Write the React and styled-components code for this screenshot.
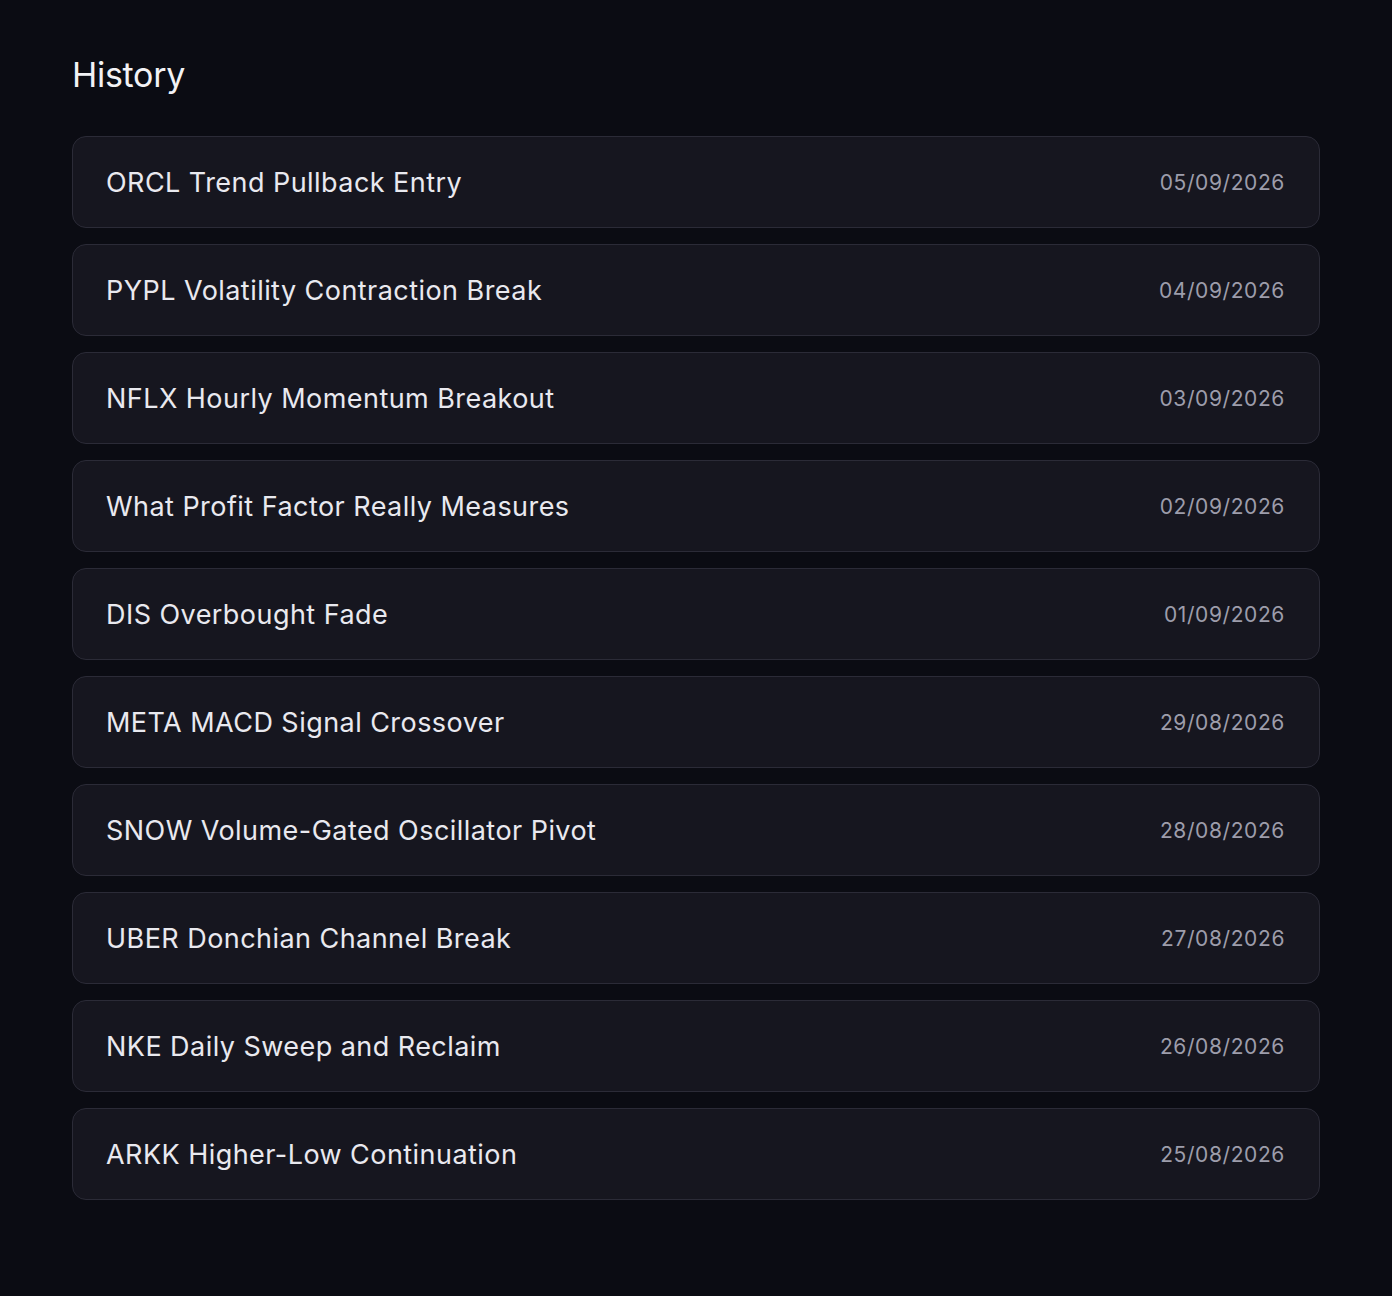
import React from 'react';
import styled, { createGlobalStyle } from 'styled-components';

const GlobalStyle = createGlobalStyle`
  html, body {
    margin: 0;
    padding: 0;
    background-color: #0b0c13;
  }
  body {
    font-family: Inter, "Noto Sans", sans-serif;
    -webkit-font-smoothing: antialiased;
  }
`;

const Page = styled.div`
  min-height: 1296px;
  box-sizing: border-box;
  padding: 54px 72px 72px;
  background-color: #0b0c13;
`;

const Title = styled.h1`
  margin: 0 0 40px;
  font-size: 34px;
  line-height: 42px;
  font-weight: 400;
  color: #f2f2f5;
  letter-spacing: -0.3px;
`;

const List = styled.ul`
  list-style: none;
  margin: 0;
  padding: 0;
  display: flex;
  flex-direction: column;
  gap: 16px;
`;

const Item = styled.li`
  display: flex;
  align-items: center;
  justify-content: space-between;
  padding: 29px 34px 27px 33px;
  background-color: #16161f;
  border: 1px solid #2b2b37;
  border-radius: 14px;
  cursor: pointer;
  transition: background-color 0.2s ease;

  &:hover {
    background-color: #1b1c26;
  }
`;

const Name = styled.span`
  font-size: 27px;
  line-height: 34px;
  font-weight: 400;
  color: #e9e9ef;
  letter-spacing: 0.45px;
`;

const Date = styled.span`
  font-size: 21px;
  line-height: 34px;
  color: #9d9dab;
  letter-spacing: 0.6px;
`;

const entries = [
  { name: 'ORCL Trend Pullback Entry', date: '05/09/2026' },
  { name: 'PYPL Volatility Contraction Break', date: '04/09/2026' },
  { name: 'NFLX Hourly Momentum Breakout', date: '03/09/2026' },
  { name: 'What Profit Factor Really Measures', date: '02/09/2026' },
  { name: 'DIS Overbought Fade', date: '01/09/2026' },
  { name: 'META MACD Signal Crossover', date: '29/08/2026' },
  { name: 'SNOW Volume-Gated Oscillator Pivot', date: '28/08/2026' },
  { name: 'UBER Donchian Channel Break', date: '27/08/2026' },
  { name: 'NKE Daily Sweep and Reclaim', date: '26/08/2026' },
  { name: 'ARKK Higher-Low Continuation', date: '25/08/2026' },
];

const App = () => (
  <>
    <GlobalStyle />
    <Page>
      <Title>History</Title>
      <List>
        {entries.map((e) => (
          <Item key={e.name}>
            <Name>{e.name}</Name>
            <Date>{e.date}</Date>
          </Item>
        ))}
      </List>
    </Page>
  </>
);

export default App;
